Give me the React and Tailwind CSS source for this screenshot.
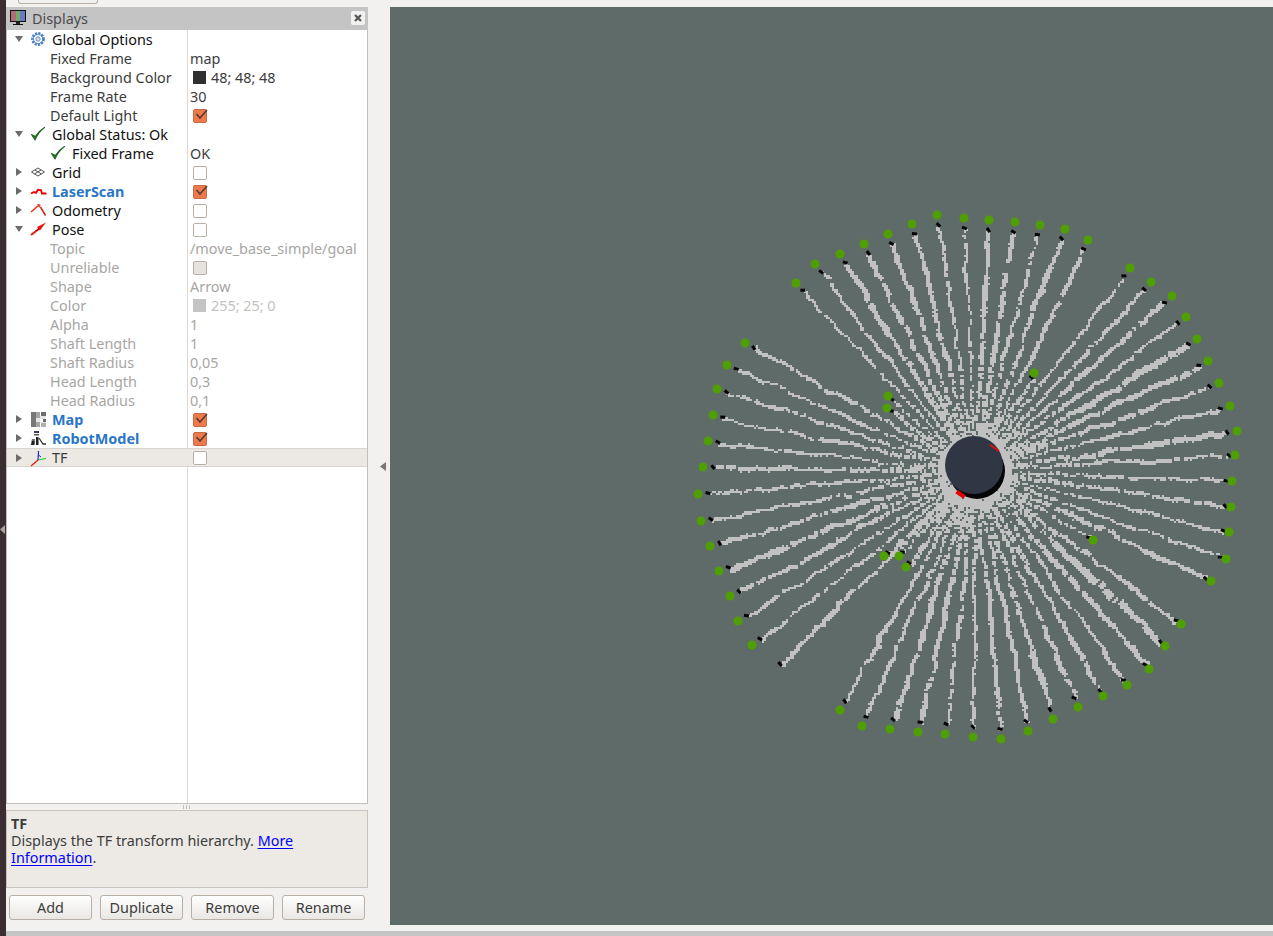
import React from 'react';

// green scan endpoints read off the screenshot, in page coordinates
const outerDots = [
  [796,283],[815,264],[840,254],[864,244],[888,234],[912,224],[937,215],[964,218],[989,220],[1015,222],[1040,225],[1065,229],[1088,240],
  [1130,268],[1151,282],[1172,296],[1186,317],[1197,339],[1208,361],[1219,383],[1230,406],[1237,431],[1235,455],[1232,481],[1231,507],[1229,532],[1226,559],[1211,581],
  [1181,624],[1165,646],[1149,669],[1127,685],[1103,696],[1078,707],[1053,719],[1028,731],[1001,739],[973,737],[945,734],[918,732],[890,729],[862,726],[840,710],
  [752,645],[738,621],[730,596],[719,571],[710,546],[701,521],[698,494],[703,467],[708,441],[713,415],[717,389],[727,365],[745,343],
];
// obstacles close to the robot: the tip sits right next to the dot
const innerDots = [[888,396],[887,408],[1034,373],[884,556],[899,556],[906,567],[1093,540]];
const bareEnds = [[780,664]];

const CX = 974;
const CY = 470;
const OX = 390;
const OY = 7;

function makeScan() {
  let seed = 12345;
  const rnd = () => {
    seed = (seed * 16807) % 2147483647;
    return seed / 2147483647;
  };
  const cells = new Set();
  const tips = [];
  const put = (x, y) => cells.add(`${Math.round((x - OX) / 2) * 2},${Math.round((y - OY) / 2) * 2}`);
  const addRay = (ex, ey, gap) => {
    const dx = ex - CX;
    const dy = ey - CY;
    const len = Math.hypot(dx, dy);
    const ux = dx / len;
    const uy = dy / len;
    const end = len - gap;
    const thick = 0.8 + rnd() * 2.4;
    const phase = rnd() * 7;
    let off = 0;
    let w = thick;
    for (let r = 14; r < end; r += 1.2) {
      off = off * 0.88 + (rnd() - 0.5) * 1.7;
      if (r < 110 && (r + phase) % 7 < 2.2) continue;
      // the scan lines break into short jogged runs
      if (rnd() < 0.025) {
        r += 2.4;
        off += (rnd() - 0.5) * 3;
        continue;
      }
      if (rnd() < 0.12) w = thick * (0.5 + rnd() * 1.1);
      for (let k = -w / 2; k <= w / 2; k += 1) {
        put(CX + ux * r - uy * (off + k), CY + uy * r + ux * (off + k));
      }
    }
    tips.push([CX + ux * end - OX, CY + uy * end - OY]);
  };
  // tips hug the dots on the lower right, further off on the upper left
  outerDots.forEach(([x, y]) => addRay(x, y, x > 1100 && y > 450 ? 6 : 10));
  innerDots.forEach(([x, y]) => addRay(x, y, 5));
  bareEnds.forEach(([x, y]) => addRay(x, y, 0));
  // dense floor right around the robot
  for (let x = CX - 44; x <= CX + 44; x += 2) {
    for (let y = CY - 44; y <= CY + 44; y += 2) {
      const r = Math.hypot(x - CX, y - CY);
      if (r < 38 && rnd() < 0.9) put(x, y);
    }
  }
  let d = '';
  cells.forEach((c) => {
    const [x, y] = c.split(',');
    d += `M${x} ${y}h2v2h-2z`;
  });
  return { d, tips };
}

const scan = makeScan();
const allDots = [...outerDots, ...innerDots];

function ScanView() {
  return (
    <svg width="883" height="918" viewBox="0 0 883 918" className="block">
      <path d={scan.d} fill="#c1c1c1" shapeRendering="crispEdges" />
      {scan.tips.map(([x, y], i) => (
        <rect key={i} x={x - 2.5} y={y - 1.5} width="5" height="3" fill="#050505" transform={`rotate(${(i * 37) % 60} ${x} ${y})`} />
      ))}
      {allDots.map(([x, y], i) => (
        <circle key={i} cx={x - OX} cy={y - OY} r="4.500" fill="#4f9f02" />
      ))}
      {/* robot */}
      <circle cx={977 - OX} cy={471 - OY} r="28" fill="#060608" />
      <circle cx={974 - OX} cy={465 - OY} r="29" fill="#303644" />
      <path d="M600 438l9 6" stroke="#d81414" strokeWidth="2" fill="none" />
      <path d="M566.500 484.500l8 5.500" stroke="#e00000" strokeWidth="4" fill="none" />
    </svg>
  );
}

const Arrow = ({ open }) => (
  <svg width="8" height="8" viewBox="0 0 8 8" className="block">
    {open ? <path d="M0 1h8L4 7z" fill="#6b6b6b" /> : <path d="M1 0v8l6-4z" fill="#6b6b6b" />}
  </svg>
);

const GearIcon = () => (
  <svg width="16" height="16" viewBox="0 0 16 16">
    <circle cx="8" cy="8" r="5.500" fill="none" stroke="#4a7cc4" strokeWidth="2.800" strokeDasharray="2 1.200" />
    <circle cx="8" cy="8" r="4.800" fill="none" stroke="#5a8bd0" strokeWidth="1" />
    <circle cx="8" cy="8" r="2.200" fill="#cfe0f5" stroke="#4a7cc4" strokeWidth="0.800" />
  </svg>
);

const CheckIcon = () => (
  <svg width="16" height="16" viewBox="0 0 16 16">
    <path d="M1.500 8.500l3.500 5.500C7 9 10 5 14.500 1.500 10.500 4 7.500 7 5.300 10.500z" fill="#256b25" stroke="#256b25" strokeWidth="1.100" strokeLinejoin="round" />
  </svg>
);

const GridIcon = () => (
  <svg width="16" height="16" viewBox="0 0 16 16">
    <path d="M1.500 8L8 4l6.500 4L8 12zM5 6l6.500 4M11 6l-6.500 4" fill="none" stroke="#555" strokeWidth="1" />
  </svg>
);

const LaserIcon = () => (
  <svg width="17" height="16" viewBox="0 0 17 16">
    <path d="M1 10.500l3-1.500 2 .8 2-3 3 .4 1 3.300h3.500v-1" fill="none" stroke="#ee0000" strokeWidth="1.900" />
  </svg>
);

const OdomIcon = () => (
  <svg width="17" height="16" viewBox="0 0 17 16">
    <path d="M1 10l7.500-6.500" stroke="#e8281c" strokeWidth="1.500" />
    <path d="M10.500 5l5 8.500" stroke="#c8281c" strokeWidth="1.500" />
    <path d="M7 2l3.500 .5-.5 3.500z" fill="#e8281c" />
  </svg>
);

const PoseIcon = () => (
  <svg width="17" height="16" viewBox="0 0 17 16">
    <path d="M1 14L10 7" stroke="#e8180c" strokeWidth="2" />
    <path d="M16 1.500L7 6l3 3.500z" fill="#e8180c" />
    <path d="M6 10l3-2.500" stroke="#7a1008" strokeWidth="1" />
  </svg>
);

const MapIcon = () => (
  <svg width="17" height="17" viewBox="0 0 17 17" shapeRendering="crispEdges">
    <path d="M1 1h5v15H1z" fill="#777" />
    <path d="M6 1h4v6H6zM6 11h4v5H6z" fill="#a4a4a4" />
    <path d="M11 1h5v4h-5zM13 8h3v3h-3z" fill="#6c6c6c" />
    <path d="M6 7h4v4H6zM10 5h6v3h-6zM10 11h6v1h-6z" fill="#e4e4e4" />
    <path d="M11 12h5v4h-5z" fill="#b0b0b0" />
  </svg>
);

const RobotIcon = () => (
  <svg width="17" height="17" viewBox="0 0 17 17">
    <rect x="4" y="1" width="5" height="2" fill="#33337a" />
    <rect x="4" y="4" width="5" height="1.500" fill="#555" />
    <path d="M1 15l1-6h3l-.5 6zM6 15V7h2.500v8z" fill="#222" />
    <path d="M9 8l4 6h3" fill="none" stroke="#333" strokeWidth="1.300" />
    <path d="M2 10h3" stroke="#bbb" strokeWidth="1" />
  </svg>
);

const AxesIcon = () => (
  <svg width="17" height="17" viewBox="0 0 17 17">
    <path d="M8 10L1 16" stroke="#e81818" strokeWidth="1.200" />
    <path d="M8 10l8-1.500" stroke="#22cc22" strokeWidth="1.200" />
    <path d="M8 10L8.500 1" stroke="#2222dd" strokeWidth="1.200" />
    <path d="M8.500 5L11 7" stroke="#2222dd" strokeWidth="1" />
  </svg>
);

const MonitorIcon = () => (
  <svg width="18" height="18" viewBox="0 0 18 18" shapeRendering="crispEdges">
    <rect x="1" y="1" width="16" height="12" fill="#111" />
    <rect x="2" y="2" width="5" height="10" fill="#b06a78" />
    <rect x="7" y="2" width="4" height="10" fill="#6fae6a" />
    <rect x="11" y="2" width="5" height="10" fill="#6a78c0" />
    <rect x="7" y="13" width="4" height="2" fill="#222" />
    <rect x="4" y="15" width="10" height="1" fill="#111" />
  </svg>
);

const CheckBox = ({ checked, disabled }) => {
  if (checked) {
    return (
      <span className="block w-[14px] h-[14px] rounded-[2px] bg-[#ec7a4c] border border-[#c96a44]">
        <svg width="16" height="14" viewBox="0 0 16 14" className="block -mt-[2px]">
          <path d="M2.500 6l3.500 4L13 2" fill="none" stroke="#5a3a30" strokeWidth="1.600" />
        </svg>
      </span>
    );
  }
  return <span className={`block w-[14px] h-[14px] rounded-[2px] border border-[#b8b0a6] ${disabled ? 'bg-[#e6e3df]' : 'bg-white'}`} />;
};

const labelText = 'text-[#3c3c3c]';
const mutedText = 'text-[#a8a6a3]';

function Row({ arrow, icon, indent = 'pl-[43px]', label, labelClass = 'text-[#111]', value, valueClass = 'text-[#3c3c3c]', highlighted }) {
  return (
    <div className={`flex h-[19px] items-center leading-[19px] ${highlighted ? 'bg-[#ece9e4] border-y border-[#d8d4cf]' : ''}`}>
      <div className={`relative flex items-center h-full w-[181px] shrink-0 whitespace-nowrap ${indent}`}>
        {arrow && (
          <span className="absolute left-[8px] top-[5px]">
            <Arrow open={arrow === 'open'} />
          </span>
        )}
        {icon && <span className="absolute left-[23px] top-[1px]">{icon}</span>}
        <span className={labelClass}>{label}</span>
      </div>
      <div className={`flex items-center gap-[5px] whitespace-nowrap pl-[2px] ${valueClass}`}>{value}</div>
    </div>
  );
}

const Swatch = ({ color }) => <span className={`block w-[13px] h-[13px] ml-[3px] ${color}`} />;

const Btn = ({ children }) => (
  <button className="w-[83px] h-[25px] rounded-[3px] border border-[#b8b0a6] bg-gradient-to-b from-white to-[#e9e7e4] text-[#3c3c3c] leading-[22px]">
    {children}
  </button>
);

const boxVal = (props) => <span className="ml-[3px]"><CheckBox {...props} /></span>;

const topLabel = 'pl-[45px]';

export default function App() {
  return (
    <div className="flex w-[1273px] h-[936px] overflow-hidden bg-[#f2f1f0] text-[14.4px] font-['Noto_Sans','Open_Sans',sans-serif]">
      <div className="w-[6px] shrink-0 bg-[#3b2e32] pt-[525px]">
        <svg width="6" height="9" viewBox="0 0 6 9" className="block">
          <path d="M5 0v9L0 4.500z" fill="#a9a5a0" />
        </svg>
      </div>

      <div className="flex flex-col flex-1 min-w-0">
        <div className="flex flex-1 min-h-0">
          <div className="w-[362px] shrink-0 flex flex-col">
            <div className="h-[7px] shrink-0 pl-[12px]">
              <div className="w-[80px] h-[4px] border-x border-b border-[#b8b0a6] rounded-b-[3px]" />
            </div>

            <div className="h-[23px] shrink-0 flex items-center bg-[#c4c4c4] relative pl-[26px] text-[#4a4a50]">
              <span className="absolute left-[3px] top-[2px]"><MonitorIcon /></span>
              Displays
              <span className="absolute right-[3px] top-[4px] w-[14px] h-[14px] rounded-[2px] bg-[#f2f1f0] flex items-center justify-center">
                <svg width="10" height="10" viewBox="0 0 10 10">
                  <path d="M2 2l6 6M8 2l-6 6" stroke="#555" strokeWidth="2.200" />
                </svg>
              </span>
            </div>

            <div className="h-[774px] shrink-0 relative bg-white border-x border-b border-[#c4bfb8]">
              <div className="absolute left-[180px] top-0 bottom-0 w-px bg-[#dcdad6]" />
              <div className="relative">
                <Row arrow="open" icon={<GearIcon />} indent={topLabel} label="Global Options" />
                <Row label="Fixed Frame" labelClass={labelText} value="map" />
                <Row label="Background Color" labelClass={labelText} value={<><Swatch color="bg-[#303030]" /><span>48; 48; 48</span></>} />
                <Row label="Frame Rate" labelClass={labelText} value="30" />
                <Row label="Default Light" labelClass={labelText} value={boxVal({ checked: true })} />
                <Row arrow="open" icon={<CheckIcon />} indent={topLabel} label="Global Status: Ok" />
                <Row indent="pl-[65px]" icon={<span className="relative left-[20px]"><CheckIcon /></span>} label="Fixed Frame" value="OK" />
                <Row arrow="closed" icon={<GridIcon />} indent={topLabel} label="Grid" value={boxVal({})} />
                <Row arrow="closed" icon={<LaserIcon />} indent={topLabel} label="LaserScan" labelClass="font-bold text-[#2a76c6]" value={boxVal({ checked: true })} />
                <Row arrow="closed" icon={<OdomIcon />} indent={topLabel} label="Odometry" value={boxVal({})} />
                <Row arrow="open" icon={<PoseIcon />} indent={topLabel} label="Pose" value={boxVal({})} />
                <Row label="Topic" labelClass={mutedText} valueClass={mutedText} value="/move_base_simple/goal" />
                <Row label="Unreliable" labelClass={mutedText} value={boxVal({ disabled: true })} />
                <Row label="Shape" labelClass={mutedText} valueClass={mutedText} value="Arrow" />
                <Row label="Color" labelClass={mutedText} valueClass="text-[#c4c2bf]" value={<><Swatch color="bg-[#c4c4c4]" /><span>255; 25; 0</span></>} />
                <Row label="Alpha" labelClass={mutedText} valueClass={mutedText} value="1" />
                <Row label="Shaft Length" labelClass={mutedText} valueClass={mutedText} value="1" />
                <Row label="Shaft Radius" labelClass={mutedText} valueClass={mutedText} value="0,05" />
                <Row label="Head Length" labelClass={mutedText} valueClass={mutedText} value="0,3" />
                <Row label="Head Radius" labelClass={mutedText} valueClass={mutedText} value="0,1" />
                <Row arrow="closed" icon={<MapIcon />} indent={topLabel} label="Map" labelClass="font-bold text-[#2a76c6]" value={boxVal({ checked: true })} />
                <Row arrow="closed" icon={<RobotIcon />} indent={topLabel} label="RobotModel" labelClass="font-bold text-[#2a76c6]" value={boxVal({ checked: true })} />
                <Row arrow="closed" icon={<AxesIcon />} indent={topLabel} label="TF" labelClass="text-[#3c3c3c]" value={boxVal({})} highlighted />
              </div>
            </div>

            <div className="h-[6px] shrink-0 flex justify-center gap-[2px] pt-[1px] pr-[1px]">
              <span className="w-px h-[4px] bg-[#c4bfb8]" />
              <span className="w-px h-[4px] bg-[#c4bfb8]" />
              <span className="w-px h-[4px] bg-[#c4bfb8]" />
            </div>

            <div className="h-[78px] shrink-0 bg-[#edeae6] border border-[#c9c3bc] px-[4px] text-[#3c3c3c] leading-[17px] pt-[4px]">
              <div className="font-bold">TF</div>
              <div>
                Displays the TF transform hierarchy. <a className="text-[#0000ff] underline underline-offset-2" href="#tf">More</a>
              </div>
              <div>
                <a className="text-[#0000ff] underline underline-offset-2" href="#tf">Information</a>.
              </div>
            </div>

            <div className="flex gap-[8px] pl-[3px] pt-[7px]">
              <Btn>Add</Btn>
              <Btn>Duplicate</Btn>
              <Btn>Remove</Btn>
              <Btn>Rename</Btn>
            </div>
          </div>

          <div className="w-[22px] shrink-0 pt-[462px] pl-[12px]">
            <svg width="6" height="9" viewBox="0 0 6 9" className="block">
              <path d="M6 0v9L0 4.500z" fill="#777" />
            </svg>
          </div>

          <div className="w-[883px] h-[918px] mt-[7px] bg-[#5f6b69] overflow-hidden">
            <ScanView />
          </div>
        </div>
        <div className="h-[5px] shrink-0 bg-[#c4c4c4]" />
      </div>
    </div>
  );
}
